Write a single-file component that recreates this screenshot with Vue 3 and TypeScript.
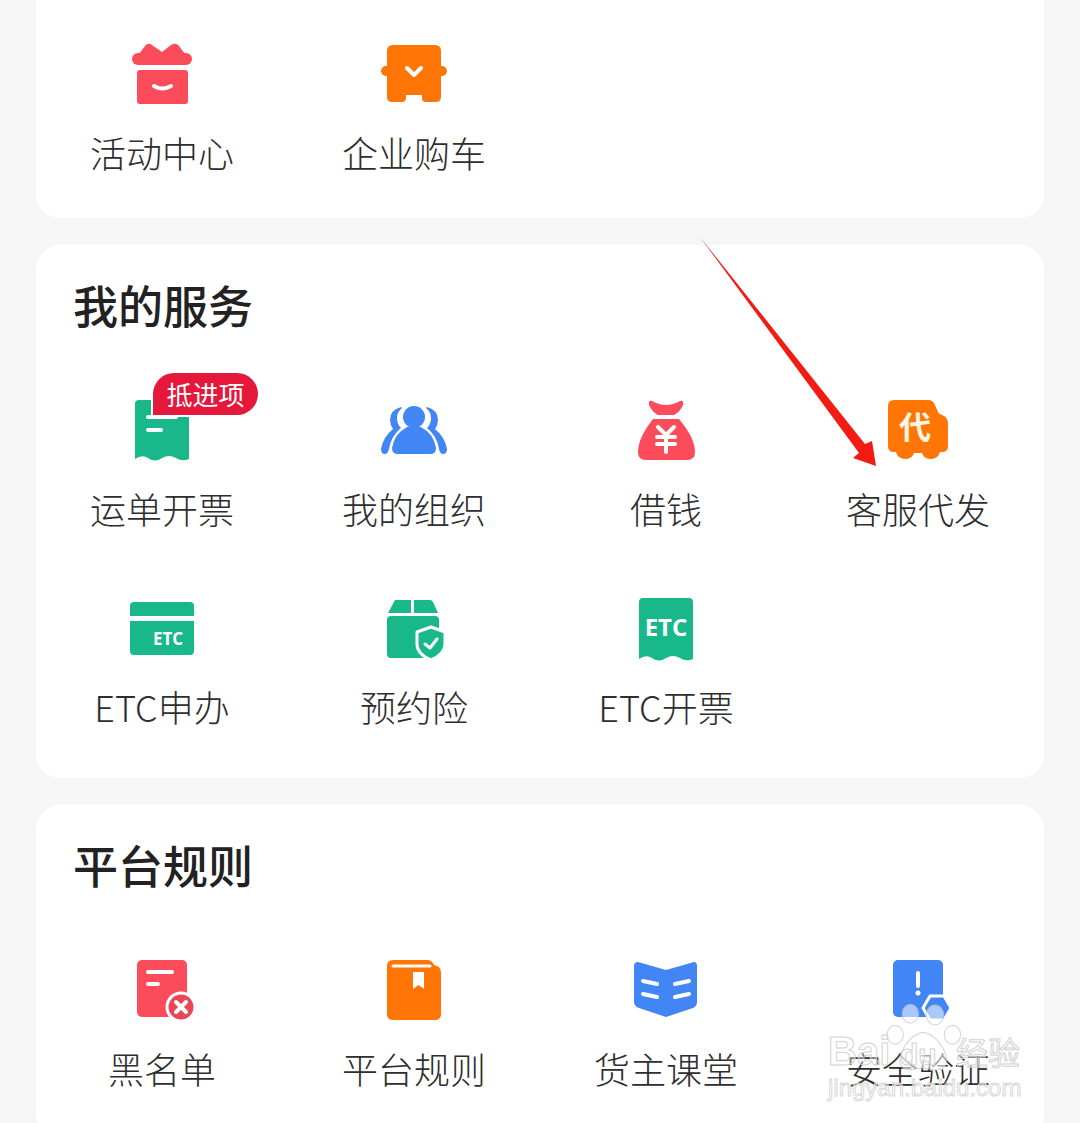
<template>
  <div class="page">
    <section class="card card-top">
      <div class="grid">
        <div class="tile">
          <svg class="icon" viewBox="0 0 100 72">
            <path class="red" d="M27 16 L33 8 Q36 4 40 7 L50 14 L59 7 Q64 4 67 8 L73 16 Z" />
            <rect class="red" x="20" y="15" width="60" height="12" rx="6" />
            <rect class="red" x="25" y="32" width="51" height="34" rx="3" />
            <path class="line" d="M42 48 Q50 53 59 48" />
          </svg>
          <span class="label">活动中心</span>
        </div>
        <div class="tile">
          <svg class="icon" viewBox="0 0 100 72">
            <path class="orange" d="M29 7 H71 Q77 7 77 13 V28 H78 a5 5 0 0 1 0 10 H77 V59 Q77 64 72 64 H62 Q58 64 58 60 V57 H42 V60 Q42 64 38 64 H28 Q23 64 23 59 V38 H22 a5 5 0 0 1 0 -10 H23 V13 Q23 7 29 7 Z" />
            <path class="line" d="M43 30 L50 37 L57 30" />
          </svg>
          <span class="label">企业购车</span>
        </div>
      </div>
    </section>

    <section class="card">
      <h2 class="title">我的服务</h2>
      <div class="grid">
        <div class="tile">
          <svg class="icon" viewBox="0 0 100 72">
            <path class="green" d="M27 6 H73 Q77 6 77 10 V65 Q70 68 64 64 Q57 60 50 64 Q43 69 36 64 Q30 60 23 65 V10 Q23 6 27 6 Z" />
            <path class="line" d="M36 23 H64 M36 36 H49" />
          </svg>
          <span class="badge">抵进项</span>
          <span class="label">运单开票</span>
        </div>
        <div class="tile">
          <svg class="icon" viewBox="0 0 100 72">
            <path class="blue" d="M37 13 Q26 16 26 26 Q26 31 29 35 Q19 43 17 55 Q17 60 21 60 Q24 60 25 55 Q27 42 37 34 Q33 30 33 24 Q33 18 38 14 Z" />
            <path class="blue" d="M63 13 Q74 16 74 26 Q74 31 71 35 Q81 43 83 55 Q83 60 79 60 Q76 60 75 55 Q73 42 63 34 Q67 30 67 24 Q67 18 62 14 Z" />
            <circle class="blue" cx="50" cy="23" r="11" />
            <path class="blue" d="M43 33 H57 Q70 40 72 54 Q72 60 66 60 H34 Q28 60 28 54 Q30 40 43 33 Z" />
          </svg>
          <span class="label">我的组织</span>
        </div>
        <div class="tile">
          <svg class="icon" viewBox="0 0 100 72">
            <path class="red" d="M36 7 Q50 15 64 7 Q68 6 67 11 Q64 18 58 21 H42 Q36 18 33 11 Q32 6 36 7 Z" />
            <path class="red" d="M37 25 H63 Q79 44 79 58 Q79 66 71 66 H30 Q22 66 22 58 Q22 44 37 25 Z" />
            <path class="line" d="M42 33 L50 41 L58 33 M41 43 H59 M41 50 H59 M50 41 V58" />
          </svg>
          <span class="label">借钱</span>
        </div>
        <div class="tile">
          <svg class="icon" viewBox="0 0 100 72">
            <path class="orange" d="M26 6 H60 Q65 6 67 11 L70 18 Q71 20 74 21 Q80 23 80 30 V52 Q80 58 74 58 H72 Q70 65 63 65 Q56 65 54 59 H46 Q44 65 37 65 Q30 65 28 58 H26 Q20 58 20 52 V12 Q20 6 26 6 Z" />
            <text class="dai" x="47" y="45" text-anchor="middle">代</text>
          </svg>
          <span class="label">客服代发</span>
        </div>
        <div class="tile">
          <svg class="icon" viewBox="0 0 100 72">
            <path class="green" d="M22 10 H78 Q82 10 82 14 V24 H18 V14 Q18 10 22 10 Z" />
            <path class="green" d="M18 29 H82 V59 Q82 63 78 63 H22 Q18 63 18 59 Z" />
            <text class="etc small" x="56" y="53" text-anchor="middle">ETC</text>
          </svg>
          <span class="label">ETC申办</span>
        </div>
        <div class="tile">
          <svg class="icon" viewBox="0 0 100 72">
            <path class="green" d="M31 8 H47 V21 H24 Z M50 8 H66 Q68 8 69 10 L74 21 H50 Z" />
            <rect class="green" x="23" y="24" width="52" height="42" rx="4" />
            <path class="shield" d="M67 35 L81 40 V52 Q81 62 67 68 Q53 62 53 52 V40 Z" />
            <path class="line thin" d="M61 52 L66 56 L73 47" />
          </svg>
          <span class="label">预约险</span>
        </div>
        <div class="tile">
          <svg class="icon" viewBox="0 0 100 72">
            <path class="green" d="M27 6 H73 Q77 6 77 10 V67 Q70 70 64 66 Q57 62 50 66 Q43 71 36 66 Q30 62 23 67 V10 Q23 6 27 6 Z" />
            <text class="etc" x="50" y="44" text-anchor="middle">ETC</text>
          </svg>
          <span class="label">ETC开票</span>
        </div>
      </div>
    </section>

    <section class="card">
      <h2 class="title">平台规则</h2>
      <div class="grid">
        <div class="tile">
          <svg class="icon" viewBox="0 0 100 72">
            <rect class="red" x="25" y="6" width="50" height="57" rx="5" />
            <path class="line" d="M36 18 H60 M36 30 H46" />
            <circle class="ring" cx="69" cy="53" r="14" />
            <path class="line" d="M64 48 L74 58 M74 48 L64 58" />
          </svg>
          <span class="label">黑名单</span>
        </div>
        <div class="tile">
          <svg class="icon" viewBox="0 0 100 72">
            <path class="orange" d="M29 6 H63 Q68 6 70 11 Q77 12 77 19 V60 Q77 66 71 66 H29 Q23 66 23 60 V12 Q23 6 29 6 Z" />
            <path class="line thin" d="M29 12 H66" />
            <path class="white" d="M49 18 H60 V35 L54.500 31 L49 35 Z" />
          </svg>
          <span class="label">平台规则</span>
        </div>
        <div class="tile">
          <svg class="icon" viewBox="0 0 100 72">
            <path class="blue" d="M22 8 L50 16 L78 8 Q81 8 81 12 V48 Q81 52 77 54 L50 63 L23 54 Q18 52 18 48 V12 Q18 8 22 8 Z" />
            <path class="line" d="M27 27 L41 30 M27 40 L41 43 M59 30 L73 27 M59 43 L73 40" />
          </svg>
          <span class="label">货主课堂</span>
        </div>
        <div class="tile">
          <svg class="icon" viewBox="0 0 100 72">
            <rect class="blue" x="25" y="6" width="50" height="57" rx="5" />
            <path class="line" d="M50 19 V32" />
            <circle class="white" cx="50" cy="39" r="2.500" />
            <path class="hex" d="M62 42 H76 L83 54 L76 66 H62 L55 54 Z" />
          </svg>
          <span class="label">安全验证</span>
        </div>
      </div>
    </section>

    <svg class="arrow" viewBox="0 0 200 250" width="200" height="250">
      <path d="M2 2 L167 209 L174 206 L178 231 L155 223 L161 218 Z" />
    </svg>

    <div class="watermark">
      <svg class="paw" viewBox="0 0 150 130">
        <ellipse cx="50" cy="20" rx="14" ry="16" />
        <ellipse cx="92" cy="22" rx="15" ry="17" />
        <ellipse cx="24" cy="56" rx="14" ry="16" />
        <ellipse cx="122" cy="56" rx="14" ry="16" />
        <path d="M72 52 Q96 56 110 88 Q118 116 92 116 Q72 110 50 116 Q26 116 34 88 Q48 56 72 52 Z" />
      </svg>
      <div class="mark-row"><span class="mark-bai">Bai</span><span class="mark-du">du</span><span class="mark-cn">经验</span></div>
      <div class="mark-url">jingyan.baidu.com</div>
    </div>
  </div>
</template>

<script setup lang="ts">
</script>

<style>
html, body {
  margin: 0;
  background: #f6f6f6;
}
</style>

<style scoped>
.page {
  position: relative;
  width: 1080px;
  height: 1123px;
  overflow: hidden;
  padding: 0 36px;
  box-sizing: border-box;
  background: #f6f6f6;
  font-family: "Noto Sans CJK SC", "Noto Sans", sans-serif;
}

.card {
  background: #fff;
  border-radius: 24px;
  padding: 30px 0 47px;
  margin-bottom: 27px;
}

.card-top {
  margin-top: -30px;
  padding: 68px 0 41px;
}

.title {
  margin: 0 0 59px 37px;
  font-size: 45px;
  line-height: 60px;
  font-weight: 500;
  color: #222;
}

.grid {
  display: grid;
  grid-template-columns: repeat(4, 252px);
  row-gap: 59px;
}

.tile {
  position: relative;
  display: flex;
  flex-direction: column;
  align-items: center;
}

.icon {
  width: 100px;
  height: 72px;
  margin-bottom: 17px;
  overflow: visible;
}

.label {
  font-size: 36px;
  line-height: 50px;
  font-weight: 300;
  color: #2e2e2e;
  white-space: nowrap;
}

.badge {
  position: absolute;
  left: 117px;
  top: -21px;
  width: 105px;
  height: 42px;
  border-radius: 21px 21px 21px 0;
  background: #e5173a;
  box-shadow: 0 0 0 2px #fff;
  color: #fff;
  font-size: 26px;
  line-height: 42px;
  text-align: center;
}

.red { fill: #fc4c5c; }
.orange { fill: #ff7506; }
.green { fill: #19b88a; }
.blue { fill: #4286f5; }
.white { fill: #fff; }

.line {
  fill: none;
  stroke: #fff;
  stroke-width: 4;
  stroke-linecap: round;
  stroke-linejoin: round;
}

.line.thin { stroke-width: 3; }

.ring {
  fill: #e74757;
  stroke: #fff;
  stroke-width: 3;
}

.shield {
  fill: #19b88a;
  stroke: #fff;
  stroke-width: 3;
  stroke-linejoin: round;
}

.hex {
  fill: #4286f5;
  stroke: #fff;
  stroke-width: 3;
  stroke-linejoin: round;
}

.dai {
  fill: #fff5e0;
  font-size: 32px;
  font-weight: 700;
}

.etc {
  fill: #fff;
  font-family: "Open Sans", sans-serif;
  font-size: 24px;
  font-weight: 700;
}

.etc.small { font-size: 17px; }

.arrow {
  position: absolute;
  left: 698px;
  top: 235px;
}

.arrow path { fill: #f31c14; }

.watermark {
  position: absolute;
  left: 826px;
  top: 1000px;
  width: 200px;
  height: 105px;
  pointer-events: none;
}

.paw {
  position: absolute;
  left: 55px;
  top: 2px;
  width: 88px;
  height: 76px;
  fill: rgba(255, 255, 255, 0.55);
  stroke: rgba(190, 190, 190, 0.6);
  stroke-width: 2;
}

.mark-row {
  position: absolute;
  left: 2px;
  top: 28px;
  display: flex;
  align-items: baseline;
  font-family: "Liberation Sans", sans-serif;
  color: rgba(255, 255, 255, 0.4);
  -webkit-text-stroke: 1px #d2d2d2;
  white-space: nowrap;
}

.mark-bai { font-size: 40px; font-weight: 700; width: 72px; }
.mark-du { font-size: 30px; font-weight: 700; width: 56px; }
.mark-cn { font-size: 32px; font-family: "Noto Sans CJK SC", sans-serif; }

.mark-url {
  position: absolute;
  left: 2px;
  top: 74px;
  font-family: "Liberation Sans", sans-serif;
  font-size: 24px;
  line-height: 28px;
  color: rgba(255, 255, 255, 0.4);
  -webkit-text-stroke: 1px #d8d8d8;
  white-space: nowrap;
}
</style>
